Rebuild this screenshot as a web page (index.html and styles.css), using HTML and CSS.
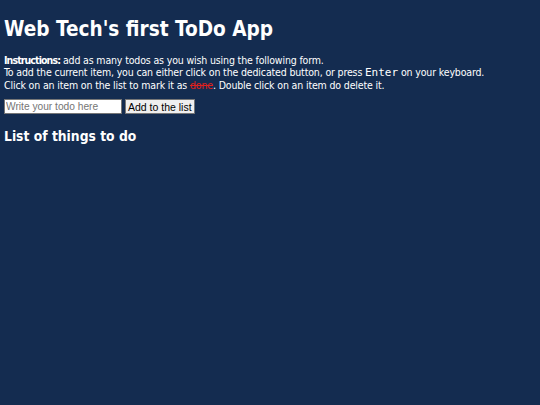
FILE: index.html
```html
<!DOCTYPE html>
<html>
<head>
<meta charset="utf-8">
<link rel="stylesheet" href="styles.css">
</head>
<body>
<h1 class="title">Web Tech's first ToDo App</h1>
<p class="instructions"><strong class="label">Instructions:</strong> add as many todos as you wish using the following form.<br>To add the current item, you can either click on the dedicated button, or press <code class="key">Enter</code> on your keyboard.<br>Click on an item on the list to mark it as <span class="done">done</span>. Double click on an item do delete it.</p>
<div class="form">
<input class="todo-input" type="text" placeholder="Write your todo here">
<button class="add-btn">Add to the list</button>
</div>
<h2 class="subtitle">List of things to do</h2>
<ul class="list"></ul>
</body>
</html>
```
FILE: styles.css
```css
html, body {
  background: #142c50;
}
body {
  margin: 0;
  padding: 0 4px;
  color: #ffffff;
  font-family: "DejaVu Sans Condensed", "DejaVu Sans", sans-serif;
}
.title {
  font-size: 20.6px;
  font-weight: bold;
  margin: 16px 0 12px;
  line-height: 26px;
}
.instructions {
  font-size: 10.5px;
  letter-spacing: -0.15px;
  line-height: 12px;
  margin: 0 0 8px;
}
.label {
  letter-spacing: -0.9px;
}
.key {
  font-family: "DejaVu Sans Mono", monospace;
  font-size: 11px;
  letter-spacing: 0;
}
.done {
  color: #e0201c;
  text-decoration: line-through;
}
.form {
  display: flex;
  gap: 3px;
  align-items: center;
}
.todo-input {
  font-family: "Liberation Sans", Arial, sans-serif;
  font-size: 10.2px;
  width: 118px;
  height: 15px;
  box-sizing: border-box;
  border: 1px solid #767676;
  padding: 0 1px;
  margin: 0;
}
.todo-input::placeholder {
  color: #757575;
}
.add-btn {
  font-family: "Liberation Sans", Arial, sans-serif;
  font-size: 10.5px;
  height: 15px;
  box-sizing: border-box;
  padding: 0 2px;
  margin: 0;
  border: 1px solid #767676;
  background: #efefef;
  color: #000;
}
.subtitle {
  font-size: 13.75px;
  font-weight: bold;
  margin: 14px 0;
}
.list {
  margin: 0;
}
```
